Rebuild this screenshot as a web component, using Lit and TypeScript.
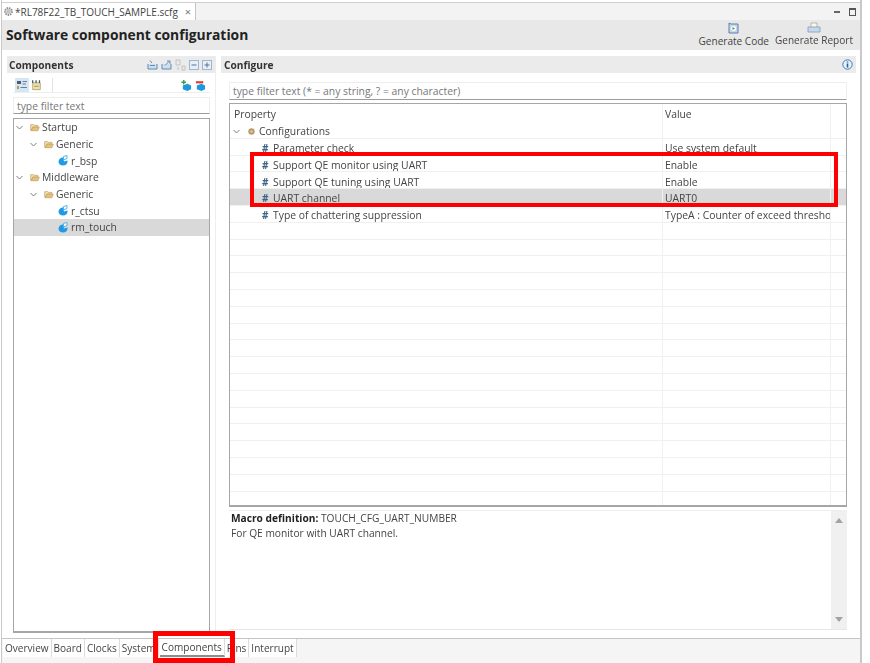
import { LitElement, html, css, svg, nothing } from "lit";
import { customElement } from "lit/decorators.js";

const TREE = [
  { label: "Startup", depth: 0, kind: "folder" },
  { label: "Generic", depth: 1, kind: "folder" },
  { label: "r_bsp", depth: 2, kind: "module" },
  { label: "Middleware", depth: 0, kind: "folder" },
  { label: "Generic", depth: 1, kind: "folder" },
  { label: "r_ctsu", depth: 2, kind: "module" },
  { label: "rm_touch", depth: 2, kind: "module", selected: true },
];

const PROPS = [
  { name: "Configurations", value: "", group: true },
  { name: "Parameter check", value: "Use system default" },
  { name: "Support QE monitor using UART", value: "Enable" },
  { name: "Support QE tuning using UART", value: "Enable" },
  { name: "UART channel", value: "UART0", selected: true },
  { name: "Type of chattering suppression", value: "TypeA : Counter of exceed threshold" },
];

const ROW_COUNT = 23;
const TABS = ["Overview", "Board", "Clocks", "System", "Components", "Pins", "Interrupt"];

const chevron = svg`<svg class="chev" width="9" height="9" viewBox="0 0 9 9"><path d="M1.500 3l3 3 3-3" fill="none" stroke="#7d7d7d" stroke-width="1"/></svg>`;

const folder = svg`<svg width="10" height="9" viewBox="0 0 14 12"><path d="M1 2h4l1 1h5v2.500H4L2.500 10H1z" fill="#f3e2b8" stroke="#c19c5c" stroke-width="1"/><path d="M3.800 5.500H13L11 10.500H1.800z" fill="#e6c27c" stroke="#c19c5c" stroke-width="1"/></svg>`;

const moduleIcon = svg`<svg width="10" height="11" viewBox="0 0 10 11"><path d="M5 2.500C2.500 2.500.5 4.500.5 6.800S2.500 10.500 5 10.500c2.500 0 4.500-1.400 4.500-3.700V5.500L6 6.500z" fill="#1f9be6"/><path d="M5.500 1.500L9 .5v3L5.500 5z" fill="#fff" stroke="#43ace8" stroke-width=".9"/></svg>`;

const gear = svg`<svg width="9" height="9" viewBox="0 0 9 9"><circle cx="4.500" cy="4.500" r="3.200" fill="#b89b6c"/><circle cx="4.500" cy="4.500" r="1.300" fill="#d9c8a6"/></svg>`;

const tabGear = svg`<svg width="11" height="11" viewBox="0 0 11 11"><circle cx="5.500" cy="5.500" r="3.400" fill="none" stroke="#8d8d8d" stroke-width="2" stroke-dasharray="1.500 .8"/><circle cx="5.500" cy="5.500" r="2.400" fill="#c4c4c4"/></svg>`;

const trayUp = svg`<svg width="11" height="11" viewBox="0 0 11 11"><path d="M1 5v5h9V5" fill="#cfdfee" stroke="#5f8bb5"/><path d="M3 6.500h5" stroke="#5f8bb5"/><path d="M3 1.500l2 2.500" stroke="#5f8bb5" fill="none"/></svg>`;
const trayOut = svg`<svg width="11" height="11" viewBox="0 0 11 11"><path d="M1 5v5h9V5" fill="#cfdfee" stroke="#5f8bb5"/><path d="M4 6.500l4-4M6 2h3v3" stroke="#5f8bb5" fill="none"/></svg>`;
const sortIcon = svg`<svg width="11" height="12" viewBox="0 0 11 12"><path d="M1 6V1h4v5zM7 11V7h3v4z" fill="none" stroke="#c2c2c2"/><path d="M3 8v3" stroke="#c2c2c2"/></svg>`;
const collapseIcon = svg`<svg width="10" height="10" viewBox="0 0 10 10"><rect x=".5" y=".5" width="9" height="9" fill="#e6eef6" stroke="#9fb6ce"/><path d="M2.500 5h5" stroke="#4f749b"/></svg>`;
const expandIcon = svg`<svg width="10" height="10" viewBox="0 0 10 10"><rect x=".5" y=".5" width="9" height="9" fill="#e6eef6" stroke="#9fb6ce"/><path d="M2.500 5h5M5 2.500v5" stroke="#4f749b"/></svg>`;
const listIcon = svg`<svg width="12" height="12" viewBox="0 0 12 12"><path d="M1 2h4v3H1z" fill="#4d5c6b"/><path d="M1 7h2v3H1z" fill="#b59b52"/><path d="M6.500 2.500H11M6.500 5H10M4.500 8.500H11" stroke="#6b7f93"/></svg>`;
const gridIcon = svg`<svg width="11" height="12" viewBox="0 0 13 13"><path d="M2 4h9v8H2z" fill="#f2e1a6" stroke="#a68f4c" stroke-width=".8"/><path d="M2 1v3M6 1v3M10 1v3" stroke="#41566b" stroke-width="1.500"/><path d="M4 8h5" stroke="#5f8bb5"/></svg>`;
const addIcon = svg`<svg width="11" height="11" viewBox="0 0 12 12"><path d="M2 6l5-2 4 2v4l-4 2-5-2z" fill="#1f97dc"/><path d="M3 0v5M.5 2.500h5" stroke="#3f9d4a" stroke-width="1.600"/></svg>`;
const removeIcon = svg`<svg width="11" height="11" viewBox="0 0 12 12"><path d="M2 6l5-2 4 2v4l-4 2-5-2z" fill="#1f97dc"/><path d="M1 2.500h8" stroke="#d9402f" stroke-width="2.400"/></svg>`;
const infoIcon = svg`<svg width="11" height="11" viewBox="0 0 11 11"><circle cx="5.500" cy="5.500" r="4.700" fill="#e8f1fa" stroke="#3f78b8"/><path d="M5.500 2.500v1M5.500 4.500v4" stroke="#2b5f9c" stroke-width="1.600"/></svg>`;
const codeIcon = svg`<svg width="11" height="12" viewBox="0 0 11 12"><path d="M1 1l2 1h7v9H1z" fill="#c9d6e8" stroke="#5f7fae"/><circle cx="5.500" cy="6.500" r="2.500" fill="#fff"/><path d="M4.500 5l2.500 1.500L4.500 8z" fill="#3f9d4a"/></svg>`;
const reportIcon = svg`<svg width="14" height="11" viewBox="0 0 14 11"><path d="M4 1h6v5H4z" fill="#fff6d8" stroke="#a8a8a8" stroke-width=".8"/><path d="M1 5h12v5H1z" fill="#c6d8ec" stroke="#7d9cc0" stroke-width=".8"/></svg>`;

@customElement("app-root")
export class AppRoot extends LitElement {
  static styles = css`
    :host {
      display: block;
      position: relative;
      width: 870px;
      height: 663px;
      overflow: hidden;
      background: #fff;
      font-family: "Open Sans", "Noto Sans", sans-serif;
      font-size: 10.35px;
      color: #333;
    }
    svg { display: block; flex-shrink: 0; }

    .window {
      box-sizing: border-box;
      width: 861px;
      height: 663px;
      margin-left: 1px;
      padding-top: 2px;
      display: flex;
      flex-direction: column;
      border-right: 2px solid #c9c9c9;
      border-left: 1px solid #c9c9c9;
      filter: blur(0.3px);
    }

    .editor-tabs {
      box-sizing: border-box;
      height: 18px;
      display: flex;
      background: #f3f3f3;
      border-top: 1px solid #cfcfcf;
      flex-shrink: 0;
    }
    .editor-tab {
      width: 194px;
      box-sizing: border-box;
      display: flex;
      align-items: center;
      gap: 1px;
      padding: 0 4px 0 1px;
      background: #fff;
      border-right: 1px solid #c4c4c4;
      font-size: 10px;
      color: #444;
    }
    .editor-tab .close { margin-left: auto; color: #777; font-size: 11px; }
    .win-btns {
      margin-left: auto;
      display: flex;
      align-items: center;
      gap: 9px;
      padding-right: 4px;
    }
    .win-min { width: 6px; height: 2px; background: #666; }
    .win-max { width: 5px; height: 5px; border: 1px solid #555; border-top-width: 2px; }

    .title-bar {
      height: 30px;
      flex-shrink: 0;
      display: flex;
      align-items: flex-start;
      background: #e8e8e8;
      padding: 0 7px 0 4px;
    }
    .title-bar h1 {
      margin: 6px 0 0;
      font-size: 13.85px;
      line-height: 18px;
      font-weight: 700;
      color: #222;
    }
    .actions { margin-left: auto; display: flex; gap: 6px; }
    .action {
      display: flex;
      flex-direction: column;
      align-items: center;
      padding-top: 2px;
      color: #444;
      line-height: 14px;
      font-size: 10.05px;
    }

    .body {
      flex: 1;
      min-height: 0;
      display: flex;
      gap: 5px;
      padding: 6px 4px 5px 5px;
    }
    .left, .right { display: flex; flex-direction: column; min-width: 0; }
    .left { width: 209px; flex-shrink: 0; border-right: 1px solid #eee; box-sizing: border-box; }
    .right { flex: 1; }

    .section-head {
      height: 17px;
      flex-shrink: 0;
      display: flex;
      align-items: center;
      padding: 0 3px;
      background: #ebebeb;
      font-weight: 700;
      font-size: 10.2px;
      color: #333;
    }
    .left .section-head { padding-left: 2px; }
    .head-icons { margin-left: auto; display: flex; align-items: center; gap: 3px; }

    .left-content {
      flex: 1;
      min-height: 0;
      display: flex;
      flex-direction: column;
      padding: 5px 5px 0 6px;
    }
    .tree-tools {
      height: 14px;
      flex-shrink: 0;
      display: flex;
      align-items: center;
      gap: 2px;
      padding: 0 2px;
      border-bottom: 1px solid #eee;
    }
    .tree-tools .on { background: #d5e7f6; padding: 1px; }
    .tree-tools .sep { width: 1px; height: 14px; background: #e2e2e2; margin-left: 8px; }
    .tree-tools .end { margin-left: auto; display: flex; gap: 3px; padding-right: 2px; }

    .filter {
      box-sizing: border-box;
      flex-shrink: 0;
      display: flex;
      align-items: center;
      background: #fff;
      border: 1px solid #eee;
      border-bottom-color: #9c9c9c;
      color: #777;
      padding: 0 3px;
    }
    .left .filter { height: 17px; margin-top: 4px; }
    .right .filter { height: 18px; margin: 9px 9px 0 8px; }

    .tree {
      flex: 1;
      min-height: 0;
      box-sizing: border-box;
      margin-top: 4px;
      border: 1px solid #a6a6a6;
      border-bottom-width: 2px;
    }
    .node {
      height: 16.7px;
      display: flex;
      align-items: center;
      gap: 2px;
      color: #444;
    }
    .node.sel { background: #d9d9d9; }
    .node .chev { margin-right: 4px; }
    .node.leaf { gap: 3px; }

    .table {
      box-sizing: border-box;
      height: 404px;
      flex-shrink: 0;
      margin: 3px 9px 0 8px;
      border: 1px solid #a6a6a6;
      border-bottom-width: 2px;
      overflow: hidden;
    }
    .tr {
      display: grid;
      grid-template-columns: 433px 168px 1fr;
      height: 16.8px;
      box-sizing: border-box;
      border-bottom: 1px solid #f0f0f0;
    }
    .tr.head { height: 18px; border-bottom: none; }
    .tr.head .td { padding-top: 1px; }
    .tr.head .td:first-child { padding-left: 4px; }
    .tr.sel { background: #d9d9d9; }
    .td {
      box-sizing: border-box;
      display: flex;
      align-items: center;
      gap: 3px;
      min-width: 0;
      overflow: hidden;
      white-space: nowrap;
      color: #444;
      padding: 2.500px 0 0 2px;
      border-right: 1px solid #f0f0f0;
    }
    .td:last-child { border-right: none; }
    .td.prop { padding-left: 32px; }
    .td.group { padding-left: 2px; }
    .td.group .chev { margin-right: 3px; }
    .hash { color: #3f6487; font-weight: 700; font-size: 10px; width: 8px; }

    .detail {
      flex-shrink: 0;
      height: 120px;
      box-sizing: border-box;
      margin: 3px 9px 0 8px;
      display: flex;
      border-top: 1px solid #eee;
      border-bottom: 1px solid #e6e6e6;
    }
    .detail-text { flex: 1; padding: 0 2px; line-height: 15px; font-size: 10.2px; color: #444; }
    .detail-text b { color: #222; }
    .scroll {
      width: 16px;
      background: #f0f0f0;
      display: flex;
      flex-direction: column;
      align-items: center;
      justify-content: space-between;
      padding: 7px 0;
      box-sizing: border-box;
    }
    .arrow-up, .arrow-down {
      width: 0;
      height: 0;
      border-left: 4px solid transparent;
      border-right: 4px solid transparent;
    }
    .arrow-up { border-bottom: 5px solid #a3a3a3; }
    .arrow-down { border-top: 5px solid #a3a3a3; }

    .page-tabs {
      height: 24px;
      flex-shrink: 0;
      display: flex;
      align-items: flex-start;
      background: #f5f5f5;
      border-top: 1px solid #c4c4c4;
      padding-left: 1px;
      font-size: 10.05px;
    }
    .page-tab {
      box-sizing: border-box;
      height: 18px;
      display: flex;
      align-items: center;
      padding: 0 2px;
      background: #fff;
      border-right: 1px solid #dcdcdc;
      color: #444;
      white-space: nowrap;
      overflow: hidden;
    }
    .page-tab.on { border-bottom: 2px solid #8c8c8c; margin-left: 1px; }

    .mark { position: absolute; box-sizing: border-box; border: 4px solid #f00; pointer-events: none; }
    .mark.rows { left: 250px; top: 152px; width: 588px; height: 55px; }
    .mark.tab { left: 153px; top: 631px; width: 82px; height: 32px; border-width: 5px; }
  `;

  private renderNode(n: (typeof TREE)[number]) {
    const leaf = n.kind === "module";
    const indent = leaf ? 44 : 1 + n.depth * 14;
    return html`<div class="node ${leaf ? "leaf" : ""} ${n.selected ? "sel" : ""}" style="padding-left:${indent}px">
      ${leaf ? nothing : chevron}
      ${leaf ? moduleIcon : folder}
      <span>${n.label}</span>
    </div>`;
  }

  private renderRow(i: number) {
    const p = PROPS[i];
    if (!p) {
      return html`<div class="tr"><div class="td"></div><div class="td"></div><div class="td"></div></div>`;
    }
    return html`<div class="tr ${p.selected ? "sel" : ""}">
      <div class="td ${p.group ? "group" : "prop"}">
        ${p.group ? html`${chevron}${gear}` : html`<span class="hash">#</span>`}
        <span>${p.name}</span>
      </div>
      <div class="td">${p.value}</div>
      <div class="td"></div>
    </div>`;
  }

  render() {
    return html`
      <div class="window">
        <div class="editor-tabs">
          <div class="editor-tab">${tabGear}<span>*RL78F22_TB_TOUCH_SAMPLE.scfg</span><span class="close">×</span></div>
          <div class="win-btns"><div class="win-min"></div><div class="win-max"></div></div>
        </div>
        <div class="title-bar">
          <h1>Software component configuration</h1>
          <div class="actions">
            <div class="action">${codeIcon}<span>Generate Code</span></div>
            <div class="action">${reportIcon}<span>Generate Report</span></div>
          </div>
        </div>
        <div class="body">
          <div class="left">
            <div class="section-head">
              Components
              <div class="head-icons">${trayUp}${trayOut}${sortIcon}${collapseIcon}${expandIcon}</div>
            </div>
            <div class="left-content">
              <div class="tree-tools">
                <span class="on">${listIcon}</span>${gridIcon}<span class="sep"></span>
                <span class="end">${addIcon}${removeIcon}</span>
              </div>
              <div class="filter">type filter text</div>
              <div class="tree">${TREE.map((n) => this.renderNode(n))}</div>
            </div>
          </div>
          <div class="right">
            <div class="section-head">
              Configure
              <div class="head-icons">${infoIcon}</div>
            </div>
            <div class="filter">type filter text (* = any string, ? = any character)</div>
            <div class="table">
              <div class="tr head"><div class="td">Property</div><div class="td">Value</div><div class="td"></div></div>
              ${Array.from({ length: ROW_COUNT }, (_, i) => this.renderRow(i))}
            </div>
            <div class="detail">
              <div class="detail-text">
                <b>Macro definition:</b> TOUCH_CFG_UART_NUMBER<br />For QE monitor with UART channel.
              </div>
              <div class="scroll"><div class="arrow-up"></div><div class="arrow-down"></div></div>
            </div>
          </div>
        </div>
        <div class="page-tabs">
          ${TABS.map((t) => html`<div class="page-tab ${t === "Components" ? "on" : ""}">${t}</div>`)}
        </div>
      </div>
      <div class="mark rows"></div>
      <div class="mark tab"></div>
    `;
  }
}
